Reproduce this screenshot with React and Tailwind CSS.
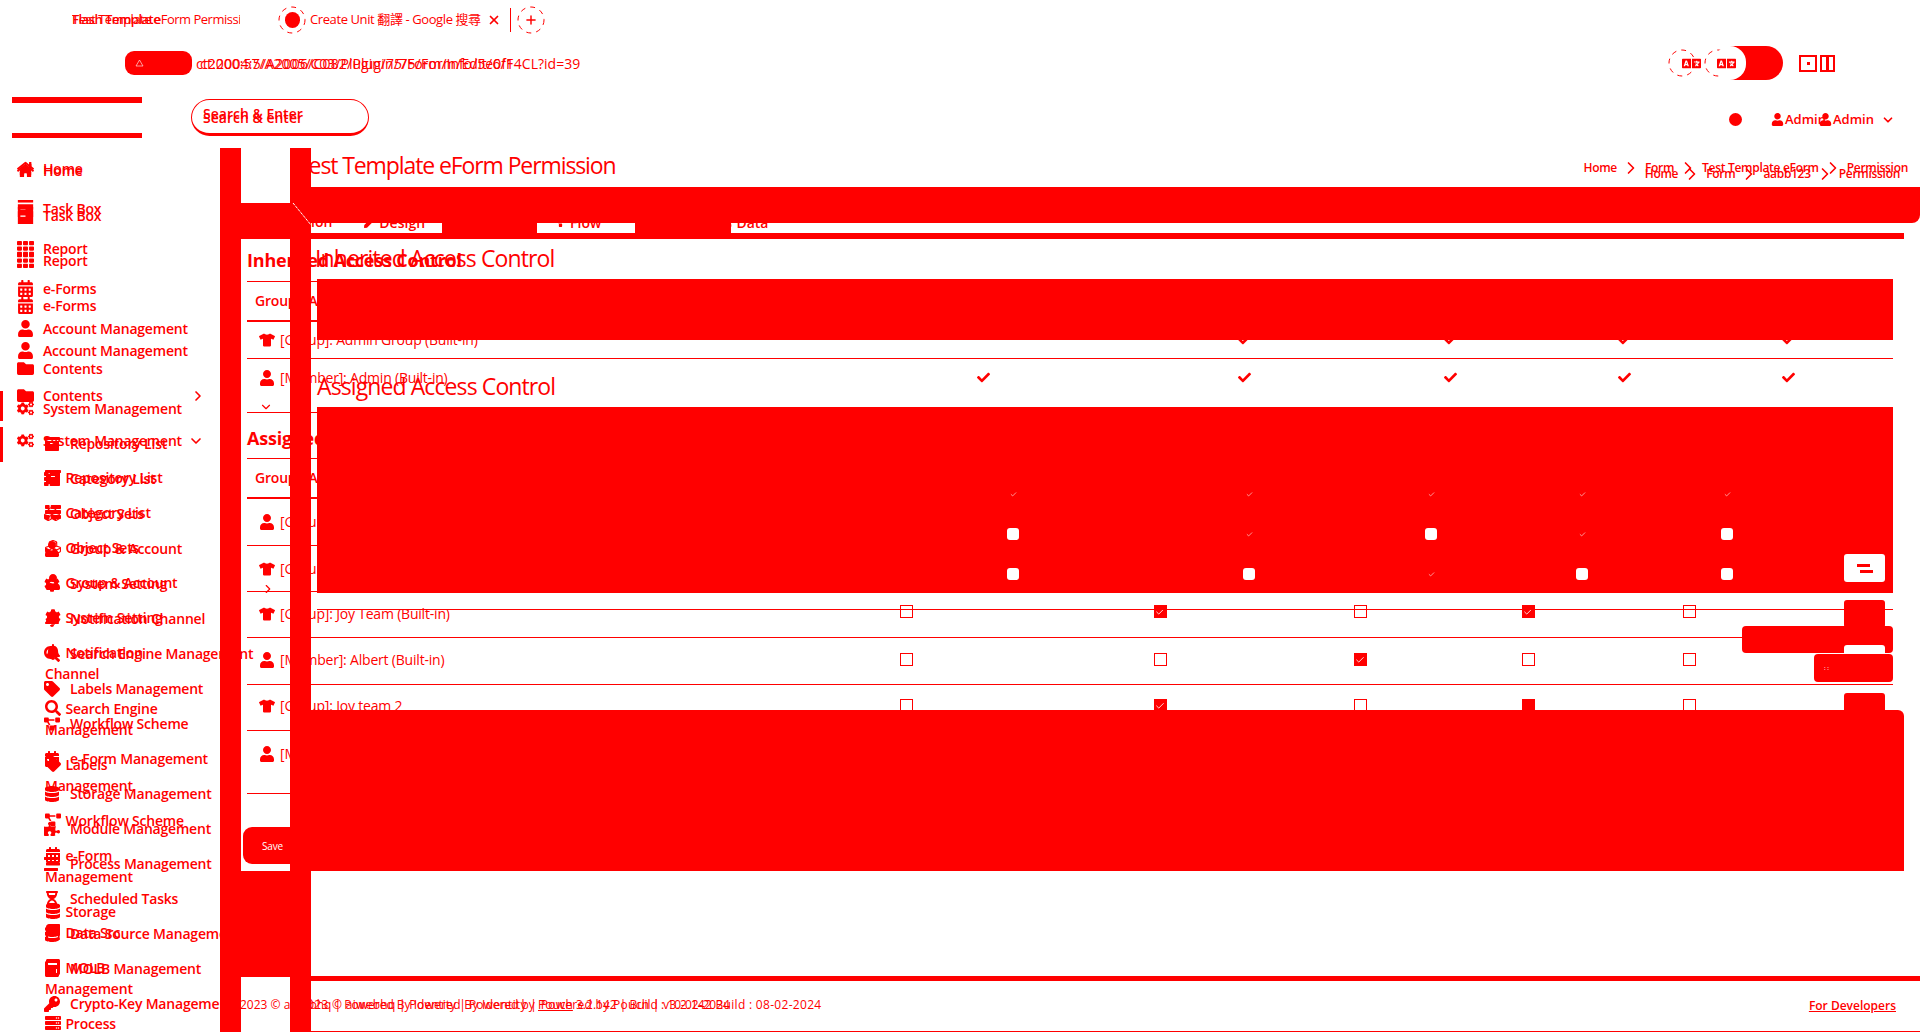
import React from "react";
import { Check, ChevronDown, ChevronRight, Plus, X } from "lucide-react";
import {
  FaArchive, FaBell, FaBook, FaCalculator, FaCalendarAlt, FaCheck, FaCog, FaCogs, FaCubes, FaDatabase, FaFolder, FaHome,
  FaHourglassHalf, FaKey, FaLanguage, FaPen, FaProjectDiagram, FaPuzzlePiece, FaSearch, FaServer,
  FaStream, FaTag, FaTh, FaThList, FaTshirt, FaUser,
} from "react-icons/fa";

const layer = "[grid-area:1/1] min-w-0";
const red = "bg-[#ff0000]";

// stacks children on the same spot
function Stack({ className = "", children }) {
  return <div className={`grid [&>*]:[grid-area:1/1] ${className}`}>{children}</div>;
}

function Ring({ size = 28, className = "" }) {
  return (
    <svg width={size} height={size} viewBox="0 0 28 28" className={className}>
      <circle cx="14" cy="14" r="13" fill="none" stroke="#ff0000" strokeWidth="1" strokeDasharray="5 5" />
    </svg>
  );
}

// filled tray with a top strip and a short dash
function TaskIcon({ size = 17 }) {
  return (
    <svg width={size} height={size} viewBox="0 0 18 20" fill="#ff0000">
      <rect x="0" y="0" width="18" height="3" />
      <rect x="0" y="5" width="18" height="15" />
      <rect x="3" y="10" width="6" height="1.5" fill="#fff" />
    </svg>
  );
}

function BrowserChrome() {
  return (
    <div className={layer}>
      <div className="flex h-[40px] items-center pl-[72px] text-[13px] font-['Open_Sans','Noto_Sans_CJK_TC',sans-serif]">
        <Stack className="w-[168px] overflow-hidden whitespace-nowrap tracking-[-0.5px]">
          <span>Test Template eForm Permission</span>
          <span className="font-semibold">Flash Template</span>
        </Stack>
        <Stack className="ml-[38px] place-items-center">
          <Ring />
          <div className={`h-[16px] w-[15px] rounded-full ${red}`} />
        </Stack>
        <span className="ml-[4px] w-[177px] whitespace-nowrap tracking-[-0.4px]">Create Unit 翻譯 - Google 搜尋</span>
        <X size={14} strokeWidth={3} />
        <div className="ml-[9px] h-[24px] w-px bg-[#ff0000]" />
        <Stack className="ml-[6px] place-items-center">
          <Ring />
          <Plus size={14} strokeWidth={2.5} />
        </Stack>
      </div>
      <div className="flex h-[46px] items-center pl-[125px]">
        <div className={`flex h-[24px] w-[67px] items-center rounded-[9px] pl-[10px] ${red}`}>
          <svg width="9" height="8" viewBox="0 0 9 8"><path d="M4.5 1 8 7H1z" fill="none" stroke="#fff" strokeWidth="0.6" /></svg>
        </div>
        <Stack className="ml-[4px] w-[390px] overflow-hidden whitespace-nowrap text-[14px] font-['Open_Sans',sans-serif]">
          <span>ct2000:57/A2005/C03/Plugin/75/Form/Info/5e0f14CL?id=39</span>
          <span className="pl-[4px] tracking-[0.2px]">ct:2004:5/A2006/C082/Plugin/75/Form/Edit/6/F</span>
        </Stack>
        <div className="ml-auto flex items-center pr-[85px]">
          <Ring />
          <FaLanguage size={19} className="ml-[-14px]" />
          <Ring className="ml-[3px]" />
          <FaLanguage size={19} className="relative z-10 ml-[-15px]" />
          <div className={`ml-[-6px] flex h-[34px] w-[53px] items-center rounded-r-[17px] ${red}`}>
            <div className="ml-[-16px] h-[34px] w-[32px] rounded-full bg-white" />
          </div>
          <div className="ml-[16px] flex h-[17px] items-center gap-[3px]">
            <div className="flex h-[17px] w-[18px] items-center justify-center border-[2px] border-[#ff0000]">
              <div className={`h-[3px] w-[3px] ${red}`} />
            </div>
            <div className="flex h-[17px] w-[15px] justify-center border-[2px] border-[#ff0000]">
              <div className={`w-[3px] ${red}`} />
            </div>
          </div>
        </div>
      </div>
    </div>
  );
}

function AppHeader() {
  return (
    <div className={`${layer} flex h-[140px] items-start pl-[12px] pt-[97px] font-['Open_Sans',sans-serif]`}>
      <div className="flex h-[41px] w-[130px] flex-col justify-between">
        <div className={`h-[6px] ${red}`} />
        <div className={`h-[5px] ${red}`} />
      </div>
      <div className="ml-[49px] mt-[2px] flex h-[37px] w-[178px] items-center rounded-full border border-b-[3px] border-[#ff0000] pl-[11px]">
        <Stack className="text-[14px] font-semibold leading-[16px]">
          <span className="mt-[-2px]">Search &amp; Enter</span>
          <span className="mt-[2px]">Search &amp; enter</span>
        </Stack>
      </div>
      <div className="ml-auto mt-[13px] flex items-center pr-[25px] text-[13px] font-semibold">
        <div className={`h-[13px] w-[13px] rounded-full ${red}`} />
        <Stack className="ml-[29px] w-[105px] whitespace-nowrap">
          <span className="flex items-center gap-[1px]">
            <FaUser size={13} /> Admin
          </span>
          <span className="flex items-center gap-[1px] pl-[48px]">
            <FaUser size={13} /> Admin
          </span>
        </Stack>
        <ChevronDown size={14} strokeWidth={3} className="ml-[5px]" />
      </div>
    </div>
  );
}

const navA = [
  { Icon: FaHome, label: "Home" },
  { Icon: TaskIcon, label: "Task Box" },
  { Icon: FaTh, label: "Report" },
  { Icon: FaCalendarAlt, label: "e-Forms" },
  { Icon: FaUser, label: "Account Management" },
  { Icon: FaFolder, label: "Contents" },
  { Icon: FaCogs, label: "System Management" },
];

const subA = [
  { Icon: FaArchive, label: "Repository List" },
  { Icon: FaThList, label: "Category List" },
  { Icon: FaCubes, label: "Object Sets" },
  { Icon: FaUser, label: "Group & Account" },
  { Icon: FaCog, label: "System Setting" },
  { Icon: FaBell, label: "Notification Channel" },
  { Icon: FaSearch, label: "Search Engine Management" },
  { Icon: FaTag, label: "Labels Management" },
  { Icon: FaProjectDiagram, label: "Workflow Scheme" },
  { Icon: FaCalendarAlt, label: "e-Form Management" },
  { Icon: FaDatabase, label: "Storage Management" },
  { Icon: FaPuzzlePiece, label: "Module Management" },
  { Icon: FaStream, label: "Process Management" },
  { Icon: FaHourglassHalf, label: "Scheduled Tasks" },
  { Icon: FaDatabase, label: "Data Source Management" },
  { Icon: FaCalculator, label: "MOLB Management" },
  { Icon: FaKey, label: "Crypto-Key Management" },
];

const subB = [
  { Icon: FaArchive, label: "Repository List", h: "h-[35px]" },
  { Icon: FaThList, label: "Category List", h: "h-[35px]" },
  { Icon: FaCubes, label: "Object Sets", h: "h-[35px]" },
  { Icon: FaUser, label: "Group & Account", h: "h-[35px]" },
  { Icon: FaCog, label: "System Setting", h: "h-[35px]" },
  { Icon: FaBell, label: "Notification Channel", h: "h-[56px]" },
  { Icon: FaSearch, label: "Search Engine Management", h: "h-[56px]" },
  { Icon: FaTag, label: "Labels Management", h: "h-[56px]" },
  { Icon: FaProjectDiagram, label: "Workflow Scheme", h: "h-[35px]" },
  { Icon: FaCalendarAlt, label: "e-Form Management", h: "h-[56px]" },
  { Icon: FaDatabase, label: "Storage", h: "h-[21px]" },
  { Icon: FaBook, label: "Data Src", h: "h-[35px]" },
  { Icon: FaCalculator, label: "MOLB Management", h: "h-[56px]" },
  { Icon: FaServer, label: "Process", h: "h-[35px]" },
];

function SidebarA() {
  return (
    <div className={`${layer} w-[290px] pt-[148px] text-[14px] font-semibold leading-[21px] font-['Open_Sans',sans-serif] tracking-[-0.2px]`}>
      {navA.map(({ Icon, label }) => (
        <div key={label} className="flex h-[40px] items-center pl-[17px]">
          <Icon size={17} />
          <span className="ml-[9px]">{label}</span>
        </div>
      ))}
      <div className="mt-[-2px]">
        {subA.map(({ Icon, label }) => (
          <div key={label} className="flex h-[35px] items-center pl-[44px]">
            <Icon size={16} />
            <span className="ml-[10px] whitespace-nowrap">{label}</span>
          </div>
        ))}
      </div>
    </div>
  );
}

function SidebarB() {
  return (
    <div className={`${layer} w-[220px] pt-[148px] text-[14px] font-semibold leading-[21px] font-['Open_Sans',sans-serif] tracking-[-0.2px]`}>
      {navA.map(({ Icon, label }, i) => (
        <div key={label} className="flex h-[45px] items-center pl-[17px]">
          <Icon size={17} />
          <span className="ml-[9px]">{label}</span>
          {i === 5 && <ChevronRight size={16} strokeWidth={2.5} className="ml-auto mr-[14px]" />}
          {i === 6 && <ChevronDown size={16} strokeWidth={2.5} className="ml-auto mr-[16px]" />}
        </div>
      ))}
      <div className="pt-[4px]">
        {subB.map(({ Icon, label, h }) => (
          <div key={label} className={`${h} w-[188px] pl-[45px]`}>
            <Icon size={16} className="mr-[1px] inline align-[-2px]" /> {label}
          </div>
        ))}
      </div>
    </div>
  );
}

function TitleBar() {
  const crumbs = ["Home", "Form", "Test Template eForm", "Permission"];
  const crumbs2 = ["Home", "Form", "aabb123", "Permission"];
  const row = (items) =>
    items.map((c, i) => (
      <React.Fragment key={c}>
        {i > 0 && <ChevronRight size={20} strokeWidth={2} className="mx-[4px]" />}
        <span>{c}</span>
      </React.Fragment>
    ));
  return (
    <div className={`${layer} h-[190px] pt-[148px] font-['Open_Sans',sans-serif]`}>
      <div className="flex items-start pl-[297px]">
        <h1 className="text-[23px] leading-[34px] tracking-[-1.1px]">Test Template eForm Permission</h1>
        <Stack className="ml-auto justify-items-end pr-[12px] text-[12px] font-semibold leading-[18px] tracking-[-0.3px]">
          <div className="flex items-center pt-[3px]">{row(crumbs)}</div>
          <div className="mr-[8px] flex items-center pt-[16px]">{row(crumbs2)}</div>
        </Stack>
      </div>
    </div>
  );
}

const inheritedGrid = "grid grid-cols-[606px_260px_262px_150px_198px_130px_40px] items-start";
const assignedGrid = "grid grid-cols-[530px_258px_250px_150px_186px_136px_136px] items-start";
const panelGrid = "grid grid-cols-[578px_236px_236px_128px_174px_116px_108px] items-center";

function RowLabel({ Icon, text, chevron }) {
  return (
    <div className="flex flex-col pl-[12px]">
      <div className="flex h-[21px] items-center">
        <Icon size={16} />
        <span className="ml-[5px] whitespace-nowrap">{text}</span>
      </div>
      {chevron}
    </div>
  );
}

// 0 empty, 1 ticked, 2 filled with no tick showing
function Box({ v }) {
  if (v) {
    return (
      <div className={`flex h-[13px] w-[13px] items-center justify-center ${red}`}>
        {v === 1 && <Check size={10} strokeWidth={2} className="text-white" />}
      </div>
    );
  }
  return <div className="h-[13px] w-[13px] border border-[#ff0000] bg-white" />;
}

function RedCheck() {
  return (
    <div className="flex h-[21px] items-center justify-center">
      <FaCheck size={13} />
    </div>
  );
}

function AssignedRow({ h, pt, Icon, text, values, chevron, btn, btnTop = "mt-[-4px]", boxTop = "" }) {
  return (
    <div className={`${assignedGrid} ${h} ${pt} border-b border-[#ff0000]`}>
      <RowLabel Icon={Icon} text={text} chevron={chevron} />
      {values &&
        values.map((v, i) => (
          <div key={i} className={`flex h-[21px] items-center justify-center ${boxTop}`}>
            <Box v={v} />
          </div>
        ))}
      {btn && <div className={`ml-[87px] h-[28px] w-[41px] rounded-[3px] ${btnTop} ${btn}`} />}
    </div>
  );
}

function Tables() {
  return (
    <div className={`${layer} ml-[247px] w-[1646px] pt-[239px] text-[14px] font-medium font-['Open_Sans',sans-serif] tracking-[-0.2px]`}>
      <h2 className="flex h-[42px] items-center text-[18px] font-bold">Inherited Access Control</h2>
      <div className="border-t border-[#ff0000]">
        <div className="flex h-[40px] items-start border-b-2 border-[#ff0000] pl-[8px] pt-[8px] font-semibold">Group / Account</div>
        <div className={`${inheritedGrid} h-[37px] border-b border-[#ff0000] pt-[7px]`}>
          <RowLabel Icon={FaTshirt} text="[Group]: Admin Group (Built-in)" />
          <div />
          <RedCheck />
          <RedCheck />
          <RedCheck />
          <RedCheck />
        </div>
        <div className={`${inheritedGrid} h-[54px] border-b border-[#ff0000] pt-[8px]`}>
          <RowLabel
            Icon={FaUser}
            text="[Member]: Admin (Built-in)"
            chevron={<ChevronDown size={14} strokeWidth={2} className="mt-[12px]" />}
          />
          <RedCheck />
          <RedCheck />
          <RedCheck />
          <RedCheck />
          <RedCheck />
        </div>
      </div>
      <h2 className="flex h-[45px] items-end pb-[6px] text-[18px] font-bold">Assigned Access Control</h2>
      <div className="border-t border-[#ff0000]">
        <div className="flex h-[40px] items-start border-b-2 border-[#ff0000] pl-[8px] pt-[8px] font-semibold">Group / Account</div>
        <AssignedRow h="h-[47px]" pt="pt-[12px]" Icon={FaUser} text="[Group]: Everyone" />
        <AssignedRow
          h="h-[46px]"
          pt="pt-[12px]"
          Icon={FaTshirt}
          text="[Group]: Admin Team"
          chevron={<ChevronRight size={14} strokeWidth={2} className="ml-[2px] mt-[3px]" />}
        />
        <AssignedRow
          h="h-[46px]"
          pt="pt-[11px]"
          Icon={FaTshirt}
          text="[Group]: Joy Team (Built-in)"
          values={[0, 1, 0, 1, 0]}
          btn={red}
          btnTop="mt-[-3px]"
          boxTop="mt-[-2px]"
        />
        <AssignedRow
          h="h-[47px]"
          pt="pt-[11px]"
          Icon={FaUser}
          text="[Member]: Albert (Built-in)"
          values={[0, 0, 1, 0, 0]}
          btn="bg-white"
          btnTop="mt-[-3px]"
        />
        <AssignedRow
          h="h-[46px]"
          pt="pt-[10px]"
          Icon={FaTshirt}
          text="[Group]: Joy team 2"
          values={[0, 1, 0, 2, 0]}
          btn={red}
          btnTop="mt-[-2px]"
        />
        <AssignedRow h="h-[63px]" pt="pt-[12px]" Icon={FaUser} text="[Member]: Joy" />
      </div>
      <div className={`mt-[33px] flex h-[37px] w-[100px] items-center gap-[4px] rounded-[9px] pl-[19px] text-white ${red} ml-[-4px]`}>
        <span className="text-[10px] leading-none">Save</span>
      </div>
    </div>
  );
}

function PanelCheck({ on }) {
  return (
    <div className="flex h-[40px] items-center justify-center">
      {on ? <Check size={7} strokeWidth={2} className="text-white" /> : <div className="h-[12px] w-[12px] rounded-[3px] bg-white" />}
    </div>
  );
}

function Panels() {
  const rows = [
    [true, true, true, true, true],
    [false, true, false, true, false],
    [false, false, true, false, false],
  ];
  return (
    <div className={`${layer} pl-[311px] pt-[239px] font-['Open_Sans',sans-serif]`}>
      <h2 className="ml-[4px] flex h-[38px] items-center text-[23px] tracking-[-0.9px]">Inherited Access Control</h2>
      <div className={`ml-[6px] mt-[2px] h-[61px] w-[1576px] ${red}`} />
      <h2 className="ml-[6px] flex h-[67px] items-end pb-[4px] text-[23px] tracking-[-0.9px]">Assigned Access Control</h2>
      <div className={`ml-[6px] h-[186px] w-[1576px] pt-[67px] ${red}`}>
        {rows.map((r, i) => (
          <div key={i} className={panelGrid}>
            <div />
            {r.map((v, j) => (
              <PanelCheck key={j} on={v} />
            ))}
            {i === 2 && (
              <div className="ml-[59px] mt-[-12px] flex h-[28px] w-[41px] flex-col items-center justify-center gap-[3px] rounded-[3px] bg-white">
                <div className={`ml-[-3px] h-[3px] w-[13px] ${red}`} />
                <div className={`ml-[3px] h-[3px] w-[13px] ${red}`} />
              </div>
            )}
          </div>
        ))}
      </div>
      <div className={`ml-[6px] mt-[16px] h-px w-[1576px] ${red}`} />
      <div className={`mt-[100px] h-[161px] w-[1593px] rounded-tr-[6px] ${red}`} />
    </div>
  );
}

function Frame() {
  return (
    <div className={`${layer} flex h-[1032px] pl-[220px] pt-[148px]`}>
      <div className={`w-[21px] ${red}`} />
      <div className="flex w-[49px] flex-col">
        <div className={`mt-[55px] h-[36px] ${red}`} />
        <div className={`mt-[632px] h-[106px] ${red}`} />
      </div>
      <div className={`w-[21px] ${red}`} />
      <div className="flex min-w-0 flex-1 flex-col">
        <div className={`ml-[-21px] mt-[39px] h-[36px] rounded-br-[8px] ${red}`} />
        <div className="flex h-[10px]">
          <div className="w-[131px]" />
          <div className={`w-[95px] ${red}`} />
          <div className="w-[98px]" />
          <div className={`w-[96px] ${red}`} />
        </div>
        <div className={`h-[6px] w-[1593px] ${red}`} />
        <div className={`mt-[737px] h-[5px] ${red}`} />
        <div className="flex-1" />
        <div className={`h-px ${red}`} />
      </div>
    </div>
  );
}

function TabLabels() {
  return (
    <div className={`${layer} h-[234px] pl-[311px] pt-[223px] overflow-hidden text-[14px] font-semibold leading-[10px] font-['Open_Sans',sans-serif]`}>
      <div className="flex h-[10px] items-start overflow-hidden">
        <span className="mt-[-6px]">ion</span>
        <span className="ml-[32px] mt-[-6px] flex items-center gap-[4px]">
          <FaPen size={11} /> Design
        </span>
        <span className="ml-[130px] mt-[-6px] flex items-center gap-[4px]">
          <FaProjectDiagram size={11} /> Flow
        </span>
        <span className="ml-[120px] mt-[-6px] flex items-center gap-[4px]">
          <FaDatabase size={11} /> Data
        </span>
      </div>
    </div>
  );
}

function Footer() {
  return (
    <div className={`${layer} flex h-[1032px] items-start justify-between pl-[240px] pr-[24px] pt-[995px] text-[12px] font-medium leading-[20px] font-['Open_Sans',sans-serif]`}>
      <Stack className="whitespace-nowrap">
        <span>2023 © aiwebhq | Powered By Identity | Powered by <u>Pouch</u> 3.2.142 | Build : 10-02-2024</span>
        <span className="pl-[60px] tracking-[0.3px]">2023 © aiwebhq | Powered By Identity | Powered by Pouch | v3.2.142 Build : 08-02-2024</span>
      </Stack>
      <a className="mt-[1px] font-semibold underline">For Developers</a>
    </div>
  );
}

function Tooltips() {
  return (
    <div className={`${layer} relative h-[1032px] pointer-events-none`}>
      <div className={`absolute left-[1742px] top-[626px] h-[27px] w-[151px] rounded-[4px] ${red}`} />
      <div className="absolute left-[1844px] top-[645px] h-[12px] w-[41px] rounded-t-[3px] bg-white" />
      <div className={`absolute left-[1814px] top-[654px] flex h-[28px] w-[79px] items-center rounded-[4px] pl-[10px] text-[6px] text-white ${red}`}>
        <span className="leading-[8px]">: :</span>
      </div>
      <svg width="24" height="28" viewBox="0 0 24 28" className="absolute left-[290px] top-[200px]">
        <path d="M3 3 21 25" stroke="#fff" strokeWidth="1" strokeDasharray="3 1" />
      </svg>
    </div>
  );
}

export default function App() {
  return (
    <div className="grid h-[1032px] w-[1920px] overflow-hidden bg-white text-[#ff0000]">
      <SidebarA />
      <SidebarB />
      <Tables />
      <TitleBar />
      <TabLabels />
      <Panels />
      <Frame />
      <BrowserChrome />
      <AppHeader />
      <Footer />
      <Tooltips />
      <div className={`${layer} flex h-[462px] flex-col pt-[391px]`}>
        <div className={`h-[30px] w-[3px] ${red}`} />
        <div className={`mt-[6px] h-[35px] w-[3px] ${red}`} />
      </div>
    </div>
  );
}
